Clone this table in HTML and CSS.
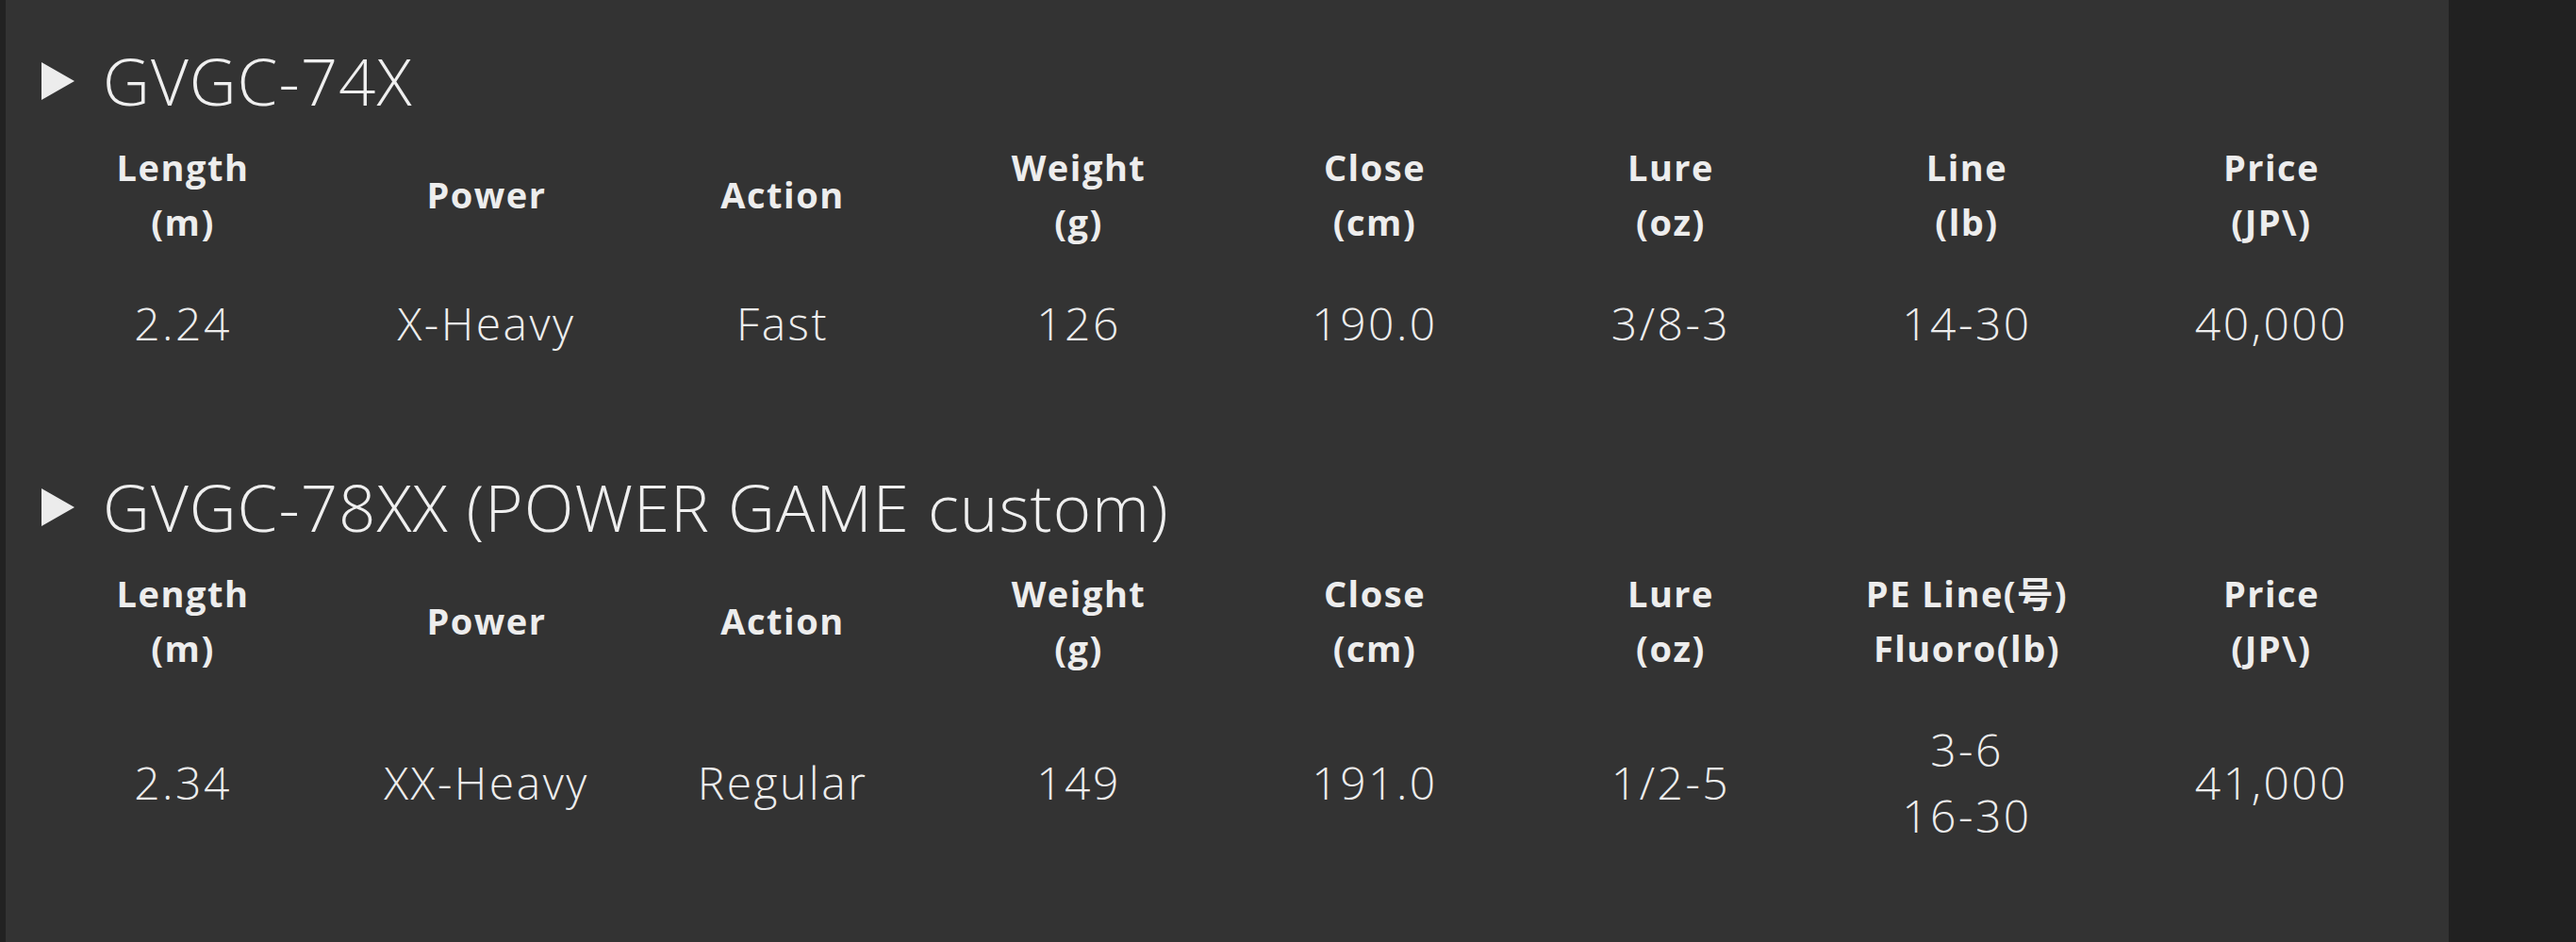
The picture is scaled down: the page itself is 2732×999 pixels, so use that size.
FILE: index.html
```html
<!DOCTYPE html>
<html lang="ja">
<head>
<meta charset="utf-8">
<title>GVGC specs</title>
<link rel="stylesheet" href="styles.css">
</head>
<body>
<div class="page">
  <div class="edge"></div>
  <main class="panel">
    <section class="model">
      <h2 class="model-title"><svg class="marker" viewBox="0 0 35 40" width="35" height="40"><polygon points="0,0 35,20 0,40" fill="#ececec"/></svg><span>GVGC-74X</span></h2>
      <div class="specs">
        <div class="th">Length<br>(m)</div>
        <div class="th">Power</div>
        <div class="th">Action</div>
        <div class="th">Weight<br>(g)</div>
        <div class="th">Close<br>(cm)</div>
        <div class="th">Lure<br>(oz)</div>
        <div class="th">Line<br>(lb)</div>
        <div class="th">Price<br>(JP\)</div>
        <div class="td">2.24</div>
        <div class="td">X-Heavy</div>
        <div class="td">Fast</div>
        <div class="td">126</div>
        <div class="td">190.0</div>
        <div class="td">3/8-3</div>
        <div class="td">14-30</div>
        <div class="td">40,000</div>
      </div>
    </section>
    <section class="model">
      <h2 class="model-title"><svg class="marker" viewBox="0 0 35 40" width="35" height="40"><polygon points="0,0 35,20 0,40" fill="#ececec"/></svg><span>GVGC-78XX (POWER GAME custom)</span></h2>
      <div class="specs">
        <div class="th">Length<br>(m)</div>
        <div class="th">Power</div>
        <div class="th">Action</div>
        <div class="th">Weight<br>(g)</div>
        <div class="th">Close<br>(cm)</div>
        <div class="th">Lure<br>(oz)</div>
        <div class="th">PE Line(号)<br>Fluoro(lb)</div>
        <div class="th">Price<br>(JP\)</div>
        <div class="td">2.34</div>
        <div class="td">XX-Heavy</div>
        <div class="td">Regular</div>
        <div class="td">149</div>
        <div class="td">191.0</div>
        <div class="td">1/2-5</div>
        <div class="td">3-6<br>16-30</div>
        <div class="td">41,000</div>
      </div>
    </section>
  </main>
  <div class="aside"></div>
</div>
</body>
</html>
```
FILE: styles.css
```css
html, body {
  margin: 0;
  padding: 0;
  background: #212121;
}
body {
  font-family: "Open Sans", "Noto Sans CJK JP", sans-serif;
  color: #ededed;
}
.page {
  display: flex;
  height: 999px;
  overflow: hidden;
}
.edge {
  width: 6px;
  flex: 0 0 6px;
  background: #222222;
}
.panel {
  flex: 0 0 2591px;
  background: #333333;
  padding: 44px 0 0 23px;
  box-sizing: border-box;
}
.aside {
  flex: 1 1 auto;
  background: #212121;
}
.model + .model {
  margin-top: 118px;
}
.model-title {
  margin: 0;
  display: flex;
  align-items: center;
  font-weight: 300;
  font-size: 69px;
  line-height: 83px;
  letter-spacing: 1px;
  color: #efefef;
}
.marker {
  margin-left: 15px;
  margin-right: 30px;
  flex: 0 0 auto;
}
.specs {
  margin-top: 21px;
  display: grid;
  grid-template-columns: 330px repeat(6, 314px) 332px;
  row-gap: 44px;
  text-align: center;
}
.th {
  align-self: center;
  font-weight: 700;
  font-size: 38px;
  line-height: 58px;
  letter-spacing: 1.5px;
}
.td {
  align-self: center;
  font-weight: 300;
  font-size: 48px;
  line-height: 70px;
  letter-spacing: 2.5px;
}
```
